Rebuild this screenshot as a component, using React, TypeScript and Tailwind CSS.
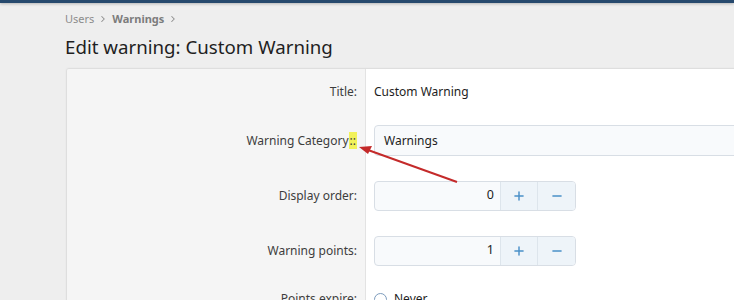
import { Plus, Minus, ChevronRight } from "lucide-react";

const font = { fontFamily: '"Noto Sans", Lato, sans-serif' };

function NumberBox({ value }: { value: number }) {
  return (
    <div className="flex h-[30px] w-[202px] rounded-[4px] border border-[#d8dee5] bg-[#f8fafc] overflow-hidden">
      <div className="flex-1 flex items-center justify-end pr-[6px] text-[12.5px] text-[#1d1d1d]">
        {value}
      </div>
      <button className="w-[37px] flex items-center justify-center border-l border-[#dde5ec] bg-[#eef4f9] text-[#4a90c8]">
        <Plus size={14} strokeWidth={2.5} />
      </button>
      <button className="w-[38px] flex items-center justify-center border-l border-[#dde5ec] bg-[#eef4f9] text-[#4a90c8]">
        <Minus size={14} strokeWidth={2.5} />
      </button>
    </div>
  );
}

function Row({ label, height, children }: { label: React.ReactNode; height: string; children: React.ReactNode }) {
  return (
    <div className={`flex ${height}`}>
      <div className="w-[298px] shrink-0 flex items-center justify-end pr-[8px] text-[12px] text-[#3d3d3d] bg-[#f5f5f5]">
        {label}
      </div>
      <div className="flex-1 flex items-center pl-[8px] border-l border-[#e3e3e3] bg-white text-[12px] text-[#1d1d1d]">
        {children}
      </div>
    </div>
  );
}

export default function App() {
  return (
    <div className="relative w-[734px] h-[300px] overflow-hidden bg-[#eeeeee]" style={font}>
      {/* Top bar */}
      <div className="h-[3px] bg-[#26496d] shadow-[0_1px_3px_rgba(0,0,0,0.25)]" />

      <div className="pl-[65px]">
        {/* Breadcrumb */}
        <div className="flex items-center gap-[4px] pt-[8px] text-[11px] leading-[16px] text-[#8c8c8c]">
          <span>Users</span>
          <ChevronRight size={10} strokeWidth={2.5} />
          <span className="font-bold text-[#7c7c7c]">Warnings</span>
          <ChevronRight size={10} strokeWidth={2.5} />
        </div>

        <h1 className="mt-[6px] text-[18.7px] leading-[28px] text-[#1f1f1f]">Edit warning: Custom Warning</h1>

        {/* Form card */}
        <div className="mt-[7px] ml-[1px] w-[720px] border border-[#dedede] rounded-tl-[3px] shadow-[0_0_2px_rgba(0,0,0,0.06)] overflow-hidden">
          <Row label="Title:" height="h-[45px]">
            Custom Warning
          </Row>
          <Row
            label={
              <span>
                Warning Category<span className="bg-[#f2f25a] px-[1px]">::</span>
              </span>
            }
            height="h-[53px]"
          >
            <div className="w-full h-[31px] flex items-center pl-[9px] rounded-[4px] border border-[#d8dee5] bg-[#f8fafc]">
              Warnings
            </div>
          </Row>
          <Row label="Display order:" height="h-[57px]">
            <NumberBox value={0} />
          </Row>
          <Row label="Warning points:" height="h-[53px]">
            <NumberBox value={1} />
          </Row>
          <Row label="Points expire:" height="h-[44px]">
            <div className="flex items-center gap-[7px]">
              <span className="w-[13px] h-[13px] rounded-full border border-[#7d9cbd] bg-white" />
              <span>Never</span>
            </div>
          </Row>
        </div>
      </div>

      {/* Annotation arrow */}
      <svg className="absolute left-0 top-0 pointer-events-none" width="734" height="300">
        <line x1="457" y1="182" x2="368" y2="150" stroke="#c42a2a" strokeWidth="2" />
        <polygon points="359,147 372,146 368,154" fill="#c42a2a" />
      </svg>
    </div>
  );
}
